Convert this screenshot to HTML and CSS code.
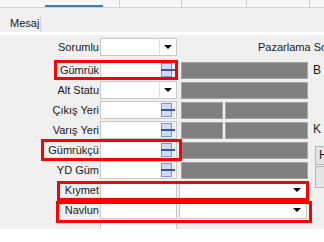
FILE: index.html
```html
<!DOCTYPE html>
<html lang="tr">
<head>
    <meta charset="UTF-8">
    <title>Mesaj</title>
    <link rel="stylesheet" href="styles.css">
</head>
<body>
    <div class="page">
        <div class="topbar">
            <div class="topcell w45"></div>
            <div class="topcell w58 active"></div>
            <div class="topcell w17 sep"></div>
            <div class="topcell w62 sep"></div>
            <div class="topcell w65 sep"></div>
            <div class="topcell w63 sep"></div>
            <div class="topcell rest"></div>
        </div>
        <div class="header">
            <div class="tab">Mesaj</div>
        </div>
        <div class="form">
            <div class="row first">
                <label class="lbl">Sorumlu</label>
                <div class="ctl"><div class="inp"></div><div class="drop"><span class="arrow"></span></div></div>
                <div class="side-text">Pazarlama Sorumlusu</div>
            </div>
            <div class="row">
                <label class="lbl">Gümrük</label>
                <div class="ctl"><div class="inp"></div><div class="look"><svg width="14" height="16" viewBox="0 0 14 16"><rect x="0.5" y="1.5" width="10" height="6" fill="#cfdcf3" stroke="#7d98cf"/><rect x="0.5" y="8.5" width="10" height="6" fill="#cfdcf3" stroke="#7d98cf"/><rect x="0" y="7" width="14" height="2" fill="#3b55a6"/></svg></div></div>
                <div class="fld"><div class="grey"></div></div>
                <div class="side">B</div>
            </div>
            <div class="row">
                <label class="lbl">Alt Statu</label>
                <div class="ctl"><div class="inp"></div><div class="drop"><span class="arrow"></span></div></div>
                <div class="fld"><div class="grey"></div></div>
            </div>
            <div class="row">
                <label class="lbl">Çıkış Yeri</label>
                <div class="ctl"><div class="inp"></div><div class="look"><svg width="14" height="16" viewBox="0 0 14 16"><rect x="0.5" y="1.5" width="10" height="6" fill="#cfdcf3" stroke="#7d98cf"/><rect x="0.5" y="8.5" width="10" height="6" fill="#cfdcf3" stroke="#7d98cf"/><rect x="0" y="7" width="14" height="2" fill="#3b55a6"/></svg></div></div>
                <div class="fld"><div class="grey short"></div><div class="grey"></div></div>
            </div>
            <div class="row">
                <label class="lbl">Varış Yeri</label>
                <div class="ctl"><div class="inp"></div><div class="look"><svg width="14" height="16" viewBox="0 0 14 16"><rect x="0.5" y="1.5" width="10" height="6" fill="#cfdcf3" stroke="#7d98cf"/><rect x="0.5" y="8.5" width="10" height="6" fill="#cfdcf3" stroke="#7d98cf"/><rect x="0" y="7" width="14" height="2" fill="#3b55a6"/></svg></div></div>
                <div class="fld"><div class="grey short"></div><div class="grey"></div></div>
                <div class="side up">K</div>
            </div>
            <div class="row">
                <label class="lbl">Gümrükçü</label>
                <div class="ctl"><div class="inp"></div><div class="look"><svg width="14" height="16" viewBox="0 0 14 16"><rect x="0.5" y="1.5" width="10" height="6" fill="#cfdcf3" stroke="#7d98cf"/><rect x="0.5" y="8.5" width="10" height="6" fill="#cfdcf3" stroke="#7d98cf"/><rect x="0" y="7" width="14" height="2" fill="#3b55a6"/></svg></div></div>
                <div class="fld"><div class="grey"></div></div>
                <div class="side"><div class="btn">H</div></div>
            </div>
            <div class="row">
                <label class="lbl">YD Güm</label>
                <div class="ctl"><div class="inp"></div><div class="look"><svg width="14" height="16" viewBox="0 0 14 16"><rect x="0.5" y="1.5" width="10" height="6" fill="#cfdcf3" stroke="#7d98cf"/><rect x="0.5" y="8.5" width="10" height="6" fill="#cfdcf3" stroke="#7d98cf"/><rect x="0" y="7" width="14" height="2" fill="#3b55a6"/></svg></div></div>
                <div class="fld"><div class="grey"></div></div>
                <div class="side"><div class="btn tall"></div></div>
            </div>
            <div class="row">
                <label class="lbl">Kıymet</label>
                <div class="ctl"><div class="inp"></div></div>
                <div class="combo"><div class="inp"></div><div class="drop"><span class="arrow"></span></div></div>
            </div>
            <div class="row">
                <label class="lbl">Navlun</label>
                <div class="ctl"><div class="inp"></div></div>
                <div class="combo"><div class="inp"></div><div class="drop"><span class="arrow"></span></div></div>
            </div>
            <div class="row last">
                <label class="lbl">Vik Have Tipi</label>
                <div class="ctl"><div class="inp"></div></div>
                <div class="panel"><span>Teplomlar</span></div>
            </div>

            <!-- isaretler -->
            <div class="mark m-gumruk"></div>
            <div class="mark m-gumrukcu"></div>
            <div class="mark m-kiymet"></div>
            <div class="mark m-navlun"></div>
        </div>
    </div>
</body>
</html>
```

FILE: styles.css
```css
body {
    margin: 0;
    padding: 0;
    background-color: #fff;
    font-family: "Liberation Sans", Arial, sans-serif;
    font-size: 11px;
    color: #1a1a1a;
}

.page {
    width: 324px;
    height: 229px;
    overflow: hidden;
    background-color: #f0f0f0;
}

.topbar {
    display: flex;
    height: 7px;
    background-color: #f7f7f7;
    border-bottom: 1px solid #d4d4d4;
}

.topcell {
    flex: none;
    height: 7px;
    box-sizing: border-box;
}

.topcell.sep {
    border-right: 1px solid #cfcfcf;
}

.topcell.active {
    border-bottom: 2px solid #2f7fd8;
}

.w45 { width: 45px; }
.w58 { width: 58px; }
.w17 { width: 17px; }
.w62 { width: 62px; }
.w65 { width: 65px; }
.w63 { width: 63px; }
.topcell.rest { flex: 1; }

.header {
    height: 24px;
    display: flex;
    align-items: flex-end;
    background-color: #f0f0f0;
    border-bottom: 3px solid #fff;
}

.tab {
    height: 15px;
    width: 30px;
    padding-left: 10px;
    line-height: 13px;
    border-right: 1px solid #d2d2d2;
}

.form {
    position: relative;
    padding-top: 2px;
}

.row {
    display: flex;
    align-items: center;
    height: 20px;
}

.row > * {
    flex: none;
}

.row.first {
    margin-bottom: 3px;
}

.lbl {
    width: 99px;
    padding-right: 1px;
    text-align: right;
    white-space: nowrap;
    overflow: hidden;
}

.ctl {
    display: flex;
    width: 77px;
    height: 18px;
}

.inp {
    flex: 1;
    background-color: #fff;
    border: 1px solid #c9c9c9;
    border-right: none;
}

.ctl .inp:only-child {
    border-right: 1px solid #c9c9c9;
}

.drop {
    width: 16px;
    display: flex;
    align-items: center;
    justify-content: center;
    background-color: #fff;
    border: 1px solid #c9c9c9;
    border-left: 1px solid #e0e0e0;
}

.arrow {
    width: 0;
    height: 0;
    border-left: 4px solid transparent;
    border-right: 4px solid transparent;
    border-top: 4px solid #000;
}

.look {
    width: 16px;
    display: flex;
    align-items: center;
    justify-content: center;
    background-color: #eef2f8;
    border: 1px solid #c9c9c9;
    border-left: none;
}

.fld {
    display: flex;
    gap: 2px;
    width: 127px;
    height: 17px;
    margin-left: 4px;
}

.grey {
    flex: 1;
    background-color: #808080;
    border: 1px solid #a4a4a4;
}

.grey.short {
    flex: 0 0 40px;
}

.side {
    margin-left: 5px;
    font-size: 12px;
}

.side.up {
    align-self: flex-start;
    margin-top: 2px;
}

.side-text {
    margin-left: 81px;
    white-space: nowrap;
}

.btn {
    width: 20px;
    height: 17px;
    margin-left: 2px;
    margin-top: 10px;
    padding-left: 3px;
    line-height: 17px;
    background-color: #e6e6e6;
    border: 1px solid #b4b4b4;
}

.btn.tall {
    margin-top: 14px;
    height: 20px;
}

.combo {
    display: flex;
    width: 128px;
    height: 17px;
    margin-left: 2px;
}

.combo .drop {
    border-left: none;
    width: 18px;
}

.combo .inp {
    border-right: none;
}

.panel {
    align-self: flex-end;
    margin-left: 12px;
    width: 130px;
    height: 6px;
    background-color: #e9e9e9;
    border-left: 1px solid #c4c4c4;
}

.panel span {
    display: block;
    margin-top: -5px;
    margin-left: 28px;
}

.row.last .lbl {
    margin-top: 12px;
}

.mark {
    position: absolute;
    box-sizing: border-box;
    border: 3px solid #f00;
}

.m-gumruk {
    left: 54px;
    top: 25px;
    width: 124px;
    height: 20px;
}

.m-gumrukcu {
    left: 41px;
    top: 104px;
    width: 141px;
    height: 22px;
}

.m-kiymet {
    left: 57px;
    top: 146px;
    width: 252px;
    height: 20px;
}

.m-navlun {
    left: 56px;
    top: 166px;
    width: 256px;
    height: 22px;
}
```
